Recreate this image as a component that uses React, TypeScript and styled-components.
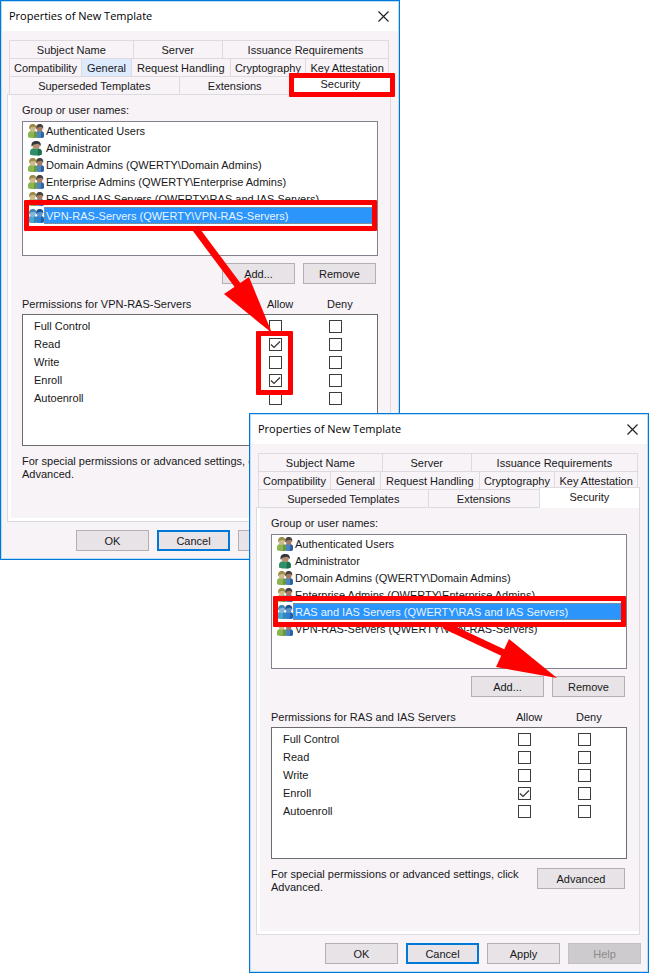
import React, { useId, useState } from "react";
import styled, { createGlobalStyle, css } from "styled-components";

const blue = "#0078d7";
const face = "#f7f3f7";
const line = "#dedbe0";
const red = "#ff0000";

const GlobalStyle = createGlobalStyle`
  *, *::before, *::after { box-sizing: border-box; }
  body { margin: 0; background: #fff; color: #181820; }
  body, button, table { font: 11px/14px "Liberation Sans", Arial, sans-serif; }
`;

const Desktop = styled.main`
  display: grid;
`;

const Window = styled.section<{ $front?: boolean }>`
  position: relative;
  grid-area: 1 / 1;
  align-self: start;
  min-width: 380px;
  margin: ${(p) => (p.$front ? "413px 0 0 249px" : "0 249px 0 0")};
  padding: 1px;
  border: 1px solid ${blue};
  background: #b9dcf7;
`;

const TitleBar = styled.header`
  display: flex;
  align-items: center;
  justify-content: space-between;
  height: 29px;
  padding: 0 8px 1px 7px;
  background: #fff;
`;

const Title = styled.h1`
  margin: 0;
  font: 11px/16px "Open Sans", "Noto Sans", sans-serif;
  color: #000;
`;

const CloseButton = styled.button`
  display: flex;
  padding: 0;
  border: 0;
  background: none;
`;

const Body = styled.div`
  padding: 9px 7px 7px 5px;
  background: ${face};
`;

const Tabs = styled.div`
  margin: 0 2px;
`;

const TabRow = styled.div`
  display: flex;
  height: 18px;
`;

const Tab = styled.button<{ $grow: number; $hot?: boolean; $active?: boolean }>`
  position: relative;
  flex: ${(p) => p.$grow} 1 0;
  padding: 0;
  border: 0 solid ${line};
  border-width: 1px 0 0 1px;
  background: ${(p) => (p.$hot ? "#deebff" : "transparent")};
  color: inherit;
  white-space: nowrap;
  &:last-child { border-right-width: 1px; }
  ${(p) =>
    p.$active &&
    css`
      z-index: 1;
      margin: -2px -2px -1px 0;
      padding-bottom: 2px;
      background: #fff;
    `}
`;

const Frame = styled.span<{ $kind: "tab" | "row" | "checks" }>`
  position: absolute;
  z-index: 3;
  border: 5px solid ${red};
  border-radius: 1px;
  pointer-events: none;
  ${(p) => p.$kind === "tab" && "inset: -2px -5px -2px -2px;"}
  ${(p) => p.$kind === "row" && "inset: -7px 0 -7px 1px;"}
  ${(p) => p.$kind === "checks" && "top: -4px; left: 11px; width: 37px; height: 64px;"}
`;

const Panel = styled.div`
  padding: 8px 12px 40px 14px;
  border: 1px solid ${line};
  box-shadow: inset 3px -3px 0 #fff;
`;

const Caption = styled.div`
  margin-bottom: 4px;
`;

const List = styled.ul`
  height: 135px;
  margin: 0;
  padding: 0;
  border: 1px solid #82838f;
  background: #fff;
  list-style: none;
`;

const Item = styled.li`
  position: relative;
  display: flex;
  align-items: center;
  height: 17px;
  padding-left: 5px;
  white-space: nowrap;
`;

const ItemName = styled.span<{ $selected?: boolean }>`
  flex: 1;
  padding: 2px 0 0 2px;
  line-height: 15px;
  ${(p) =>
    p.$selected &&
    css`
      background: #2b95fc;
      color: #e8f4ff;
      outline: 1px dotted #c98a4a;
      outline-offset: -1px;
    `}
`;

const ButtonRow = styled.div<{ $list?: boolean }>`
  display: flex;
  justify-content: flex-end;
  gap: 8px;
  margin: ${(p) => (p.$list ? "7px 2px 13px 0" : "8px -1px 0 0")};
`;

const PushButton = styled.button<{ $default?: boolean; $wide?: boolean }>`
  width: ${(p) => (p.$wide ? "88px" : "73px")};
  height: 21px;
  flex: none;
  padding: 0;
  border: ${(p) => (p.$default ? `2px solid ${blue}` : "1px solid #b3b0b3")};
  background: #e7e3e7;
  color: inherit;
  &:disabled {
    border-color: #c3c1c3;
    background: #cecbce;
    color: #8c8a8c;
  }
`;

const Permissions = styled.table`
  width: 100%;
  table-layout: fixed;
  border-collapse: separate;
  border-spacing: 0;
  th, td { padding: 0; font-weight: 400; text-align: left; vertical-align: top; }
  thead th { height: 17px; }
`;

const PermBox = styled.tbody`
  tr > * { border: 0 solid #6c6c6f; background: #fff; }
  tr > :first-child { border-left-width: 1px; }
  tr > :last-child { border-right-width: 1px; }
  tr:first-child > * { border-top-width: 1px; }
  tr:last-child > * { border-bottom-width: 1px; }
`;

const SpacerCell = styled.td<{ $height: number }>`
  height: ${(p) => p.$height}px;
`;

const RightName = styled.th`
  && { height: 18px; padding: 2px 0 2px 11px; }
`;

const HeadCell = styled.th<{ $width: number }>`
  width: ${(p) => p.$width}px;
  && { padding-left: 22px; }
`;

const CheckCell = styled.td`
  position: relative;
  && { padding: 3px 0 2px 24px; }
`;

const Check = styled.input`
  display: block;
  appearance: none;
  width: 13px;
  height: 13px;
  margin: 0;
  border: 1px solid #3c3c3c;
  background: #fff;
  &:checked {
    background: #fff
      url("data:image/svg+xml,%3Csvg xmlns='http://www.w3.org/2000/svg' viewBox='0 0 11 11'%3E%3Cpath d='M1 5.5 4 8.5 10 2.5' fill='none' stroke='%23333' stroke-width='1.2'/%3E%3C/svg%3E");
  }
`;

const Note = styled.div`
  display: flex;
  align-items: flex-start;
  justify-content: space-between;
  height: 26px;
  margin: 9px 2px 0 0;
`;

const NoteText = styled.p`
  max-width: 256px;
  margin: 0;
  line-height: 13px;
`;

const Arrow = styled.svg`
  position: absolute;
  z-index: 2;
  top: 0;
  left: 0;
  pointer-events: none;
`;

function Person({ x, coat, shade, hair, skin }: { x: number; coat: string; shade: string; hair: string; skin: string }) {
  return (
    <g transform={`translate(${x} 0)`}>
      <path d="M0 14V11C0 9.2 1.4 8.3 3 8h3C8 8.3 9 9.4 9 11v3C7 15.3 2 15.3 0 14Z" fill={coat} />
      <path d="M6.2 8.2C8 8.6 9 9.6 9 11v3c-.8.6-2 .9-3.2 1Z" fill={shade} />
      <ellipse cx="4.7" cy="5.4" rx="2.8" ry="3.5" fill={skin} />
      <path d="M1.3 6.4C.6 2.6 2.4 1 4.8 1s4.1 1.5 3.3 5C7.5 4.9 7 4 6 3.7 4.6 4.4 3.2 4 2.5 4.6 2 5.1 1.9 6 1.3 6.4Z" fill={hair} />
    </g>
  );
}

function AccountIcon({ single, selected }: { single?: boolean; selected?: boolean }) {
  return (
    <svg width="16" height="16" viewBox="0 0 16 16" aria-hidden="true">
      {single ? (
        <g transform="translate(2 0) scale(1.3 1.04)">
          <Person x={0} coat="#2f8f68" shade="#1d6d4c" hair="#33363a" skin="#b58f74" />
        </g>
      ) : selected ? (
        <>
          <Person x={7} coat="#2f7fd0" shade="#1c62b0" hair="#1e5290" skin="#5b93cc" />
          <Person x={0} coat="#4aa6cf" shade="#2f86b8" hair="#3f87b4" skin="#82b8dc" />
        </>
      ) : (
        <>
          <Person x={7} coat="#4a86c4" shade="#2d62a0" hair="#46423f" skin="#a57c62" />
          <Person x={0} coat="#8bb552" shade="#6a963c" hair="#9c8a45" skin="#cdb98a" />
        </>
      )}
    </svg>
  );
}

type TabSpec = [label: string, grow: number];

const tabRows: TabSpec[][] = [
  [["Subject Name", 124], ["Server", 89], ["Issuance Requirements", 167]],
  [["Compatibility", 72], ["General", 50], ["Request Handling", 99], ["Cryptography", 76], ["Key Attestation", 83]],
  [["Superseded Templates", 170], ["Extensions", 111], ["Security", 100]],
];

const accounts = [
  "Authenticated Users",
  "Administrator",
  "Domain Admins (QWERTY\\Domain Admins)",
  "Enterprise Admins (QWERTY\\Enterprise Admins)",
  "RAS and IAS Servers (QWERTY\\RAS and IAS Servers)",
  "VPN-RAS-Servers (QWERTY\\VPN-RAS-Servers)",
];

const rights = ["Full Control", "Read", "Write", "Enroll", "Autoenroll"];

interface DialogProps {
  front?: boolean;
  selected: number;
  hotTab?: string;
  allowed: string[];
  framed?: boolean;
  shaft: string;
  head: string;
}

function PropertiesDialog({ front, selected, hotTab, allowed, framed, shaft, head }: DialogProps) {
  const id = useId();
  const [allow, setAllow] = useState(allowed);
  const [deny, setDeny] = useState<string[]>([]);
  const flip = (set: React.Dispatch<React.SetStateAction<string[]>>, name: string) =>
    set((now) => (now.includes(name) ? now.filter((n) => n !== name) : [...now, name]));
  const principal = accounts[selected].split(" (")[0];

  return (
    <Window $front={front} role="dialog" aria-labelledby={`${id}title`}>
      <TitleBar>
        <Title id={`${id}title`}>Properties of New Template</Title>
        <CloseButton aria-label="Close">
          <svg width="13" height="13" viewBox="0 0 13 13">
            <path d="M1.5 1.5l10 10M11.5 1.5l-10 10" stroke="#222" strokeWidth="1.2" />
          </svg>
        </CloseButton>
      </TitleBar>
      <Body>
        <Tabs role="tablist">
          {tabRows.map((row, i) => (
            <TabRow key={i} role="presentation">
              {row.map(([label, grow]) => (
                <Tab
                  key={label}
                  role="tab"
                  $grow={grow}
                  $hot={label === hotTab}
                  $active={label === "Security"}
                  aria-selected={label === "Security"}
                >
                  {label}
                  {framed && label === "Security" && <Frame $kind="tab" />}
                </Tab>
              ))}
            </TabRow>
          ))}
        </Tabs>
        <Panel role="tabpanel" aria-label="Security">
          <Caption id={`${id}names`}>Group or user names:</Caption>
          <List role="listbox" aria-labelledby={`${id}names`}>
            {accounts.map((name, i) => (
              <Item key={name} role="option" aria-selected={i === selected}>
                <AccountIcon single={name === "Administrator"} selected={i === selected} />
                <ItemName $selected={i === selected}>{name}</ItemName>
                {i === selected && <Frame $kind="row" />}
              </Item>
            ))}
          </List>
          <ButtonRow $list>
            <PushButton>Add...</PushButton>
            <PushButton>Remove</PushButton>
          </ButtonRow>
          <Permissions>
            <thead>
              <tr>
                <th scope="col">Permissions for {principal}</th>
                <HeadCell scope="col" $width={60}>Allow</HeadCell>
                <HeadCell scope="col" $width={73}>Deny</HeadCell>
              </tr>
            </thead>
            <PermBox>
              <tr>
                <SpacerCell colSpan={3} $height={3} />
              </tr>
              {rights.map((name) => (
                <tr key={name}>
                  <RightName scope="row">{name}</RightName>
                  <CheckCell>
                    <Check
                      type="checkbox"
                      aria-label={`Allow ${name}`}
                      checked={allow.includes(name)}
                      onChange={() => flip(setAllow, name)}
                    />
                    {framed && name === "Read" && <Frame $kind="checks" />}
                  </CheckCell>
                  <CheckCell>
                    <Check
                      type="checkbox"
                      aria-label={`Deny ${name}`}
                      checked={deny.includes(name)}
                      onChange={() => flip(setDeny, name)}
                    />
                  </CheckCell>
                </tr>
              ))}
              <tr>
                <SpacerCell colSpan={3} $height={39} />
              </tr>
            </PermBox>
          </Permissions>
          <Note>
            <NoteText>For special permissions or advanced settings, click Advanced.</NoteText>
            <PushButton $wide>Advanced</PushButton>
          </Note>
        </Panel>
        <ButtonRow>
          <PushButton>OK</PushButton>
          <PushButton $default>Cancel</PushButton>
          <PushButton>Apply</PushButton>
          <PushButton disabled>Help</PushButton>
        </ButtonRow>
      </Body>
      <Arrow width="400" height="400" viewBox="1 1 400 400" aria-hidden="true">
        <path d={shaft} stroke={red} strokeWidth="7" />
        <path d={head} fill={red} />
      </Arrow>
    </Window>
  );
}

export default function App() {
  return (
    <>
      <GlobalStyle />
      <Desktop>
        <PropertiesDialog
          selected={5}
          hotTab="General"
          allowed={["Read", "Enroll"]}
          framed
          shaft="M195 228L242 291"
          head="M224 294L249 277L272 333Z"
        />
        <PropertiesDialog
          front
          selected={4}
          allowed={["Enroll"]}
          shaft="M195 212L259 242"
          head="M247 254L260 226L308 265Z"
        />
      </Desktop>
    </>
  );
}
